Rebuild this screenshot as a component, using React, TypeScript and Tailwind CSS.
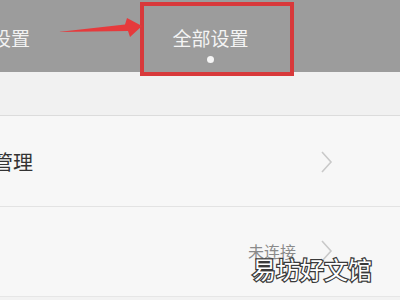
import React from "react";

const font = { fontFamily: '"Noto Sans CJK SC", "Noto Sans", sans-serif' };

function Chevron() {
  return (
    <svg width="14" height="24" viewBox="0 0 14 24" className="shrink-0">
      <path d="M2 2 L11 12 L2 22" fill="none" stroke="#c9c9c9" strokeWidth="1.6" />
    </svg>
  );
}

export default function App() {
  return (
    <div className="relative w-[400px] h-[300px] overflow-hidden bg-[#f2f2f2]" style={font}>
      {/* header */}
      <div className="flex h-[72px] bg-[#9c9c9c] items-start">
        <div className="ml-[-8px] mt-[27px] text-[19px] leading-[22px] text-[#f2f2f2] whitespace-nowrap">设置</div>
        <div className="ml-[142px] mt-[27px] w-[77px] flex flex-col items-center">
          <div className="text-[19px] leading-[22px] text-[#f4f4f4] whitespace-nowrap">全部设置</div>
          <div className="mt-[7px] w-[7px] h-[7px] rounded-full bg-[#f5f5f5]" />
        </div>
      </div>
      {/* gap area */}
      <div className="h-[44px] bg-[#f1f1f1] border-b border-[#dcdcdc]" />
      {/* row 1 */}
      <div className="h-[91px] bg-[#f7f7f7] border-b border-[#e3e3e3] flex items-center pt-[2px]">
        <div className="ml-[-7px] text-[20px] leading-[24px] text-[#333] whitespace-nowrap">管理</div>
        <div className="flex-1" />
        <div className="mr-[66px] flex items-center">
          <Chevron />
        </div>
      </div>
      {/* row 2 */}
      <div className="h-[90px] bg-[#f7f7f7] border-b border-[#e6e6e6] flex items-center pb-[1px]">
        <div className="flex-1" />
        <div className="text-[16px] leading-[20px] text-[#8a8a8a] mr-[24px] whitespace-nowrap">未连接</div>
        <div className="mr-[66px] flex items-center">
          <Chevron />
        </div>
      </div>

      {/* annotation: red box */}
      <div className="absolute left-[140px] top-[2px] w-[154px] h-[74px] border-4 border-[#d8393b]" />
      {/* annotation: arrow */}
      <svg className="absolute left-0 top-0" width="150" height="50" viewBox="0 0 150 50">
        <polygon points="58,32 125,24.5 127,18 142,26 130,37 128,31" fill="#e63a3c" />
      </svg>
      {/* watermark */}
      <div className="absolute left-[252px] top-[255px] text-[24px] leading-[28px] text-white whitespace-nowrap [-webkit-text-stroke:2.5px_#3a3a3a] [paint-order:stroke_fill]">
        易坊好文馆
      </div>
    </div>
  );
}
